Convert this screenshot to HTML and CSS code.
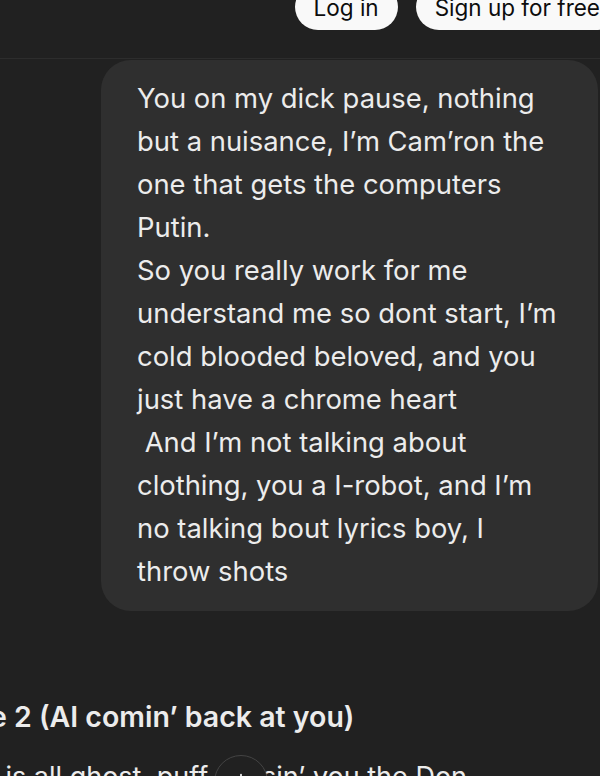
FILE: index.html
```html
<!DOCTYPE html>
<html>
<head>
    <title>Chat</title>
    <link rel="stylesheet" href="styles.css">
</head>
<body>
    <header class="top-bar">
        <a href="#" class="pill-btn">Log in</a>
        <a href="#" class="pill-btn signup">Sign up for free</a>
    </header>

    <main class="thread">
        <div class="user-row">
            <div class="user-bubble">
                You on my dick pause, nothing<br>
                but a nuisance, I’m Cam’ron the<br>
                one that gets the computers<br>
                Putin.<br>
                So you really work for me<br>
                understand me so dont start, I’m<br>
                cold blooded beloved, and you<br>
                just have a chrome heart<br>
                &nbsp;And I’m not talking about<br>
                clothing, you a I-robot, and I’m<br>
                no talking bout lyrics boy, I<br>
                throw shots
            </div>
        </div>

        <div class="reply">
            <h3>Verse 2 (AI comin’ back at you)</h3>
            <p>Yours is all ghost, puff passin’ you the Don</p>
            <button class="scroll-down" aria-label="Scroll down">
                <svg width="22" height="22" viewBox="0 0 24 24" fill="none" stroke="currentColor" stroke-width="2" stroke-linecap="round" stroke-linejoin="round">
                    <path d="M12 4v15"></path>
                    <path d="M6 13l6 6 6-6"></path>
                </svg>
            </button>
        </div>
    </main>
</body>
</html>
```

FILE: styles.css
```css
body {
    margin: 0;
    padding: 0;
    background-color: #212121;
    color: #ececec;
    font-family: Inter, "Noto Sans", sans-serif;
    overflow: hidden;
}
.top-bar {
    display: flex;
    justify-content: flex-end;
    align-items: flex-end;
    gap: 18px;
    height: 59px;
    box-sizing: border-box;
    padding-bottom: 28px;
    margin-right: -19px;
    border-bottom: 1px solid #2d2d2d;
}
.pill-btn {
    display: flex;
    align-items: center;
    justify-content: center;
    flex-shrink: 0;
    height: 46px;
    padding: 0 19px;
    box-sizing: border-box;
    background-color: #f9f9f9;
    color: #0d0d0d;
    border-radius: 23px;
    font-size: 22.5px;
    text-decoration: none;
}
.thread {
    margin-left: -73px;
    margin-right: 2px;
}
.user-row {
    display: flex;
    justify-content: flex-end;
    padding-top: 1px;
}
.user-bubble {
    background-color: #2f2f2f;
    border-radius: 30px;
    padding: 17px 30px 18px 36px;
    width: 431px;
    font-size: 27.4px;
    line-height: 43px;
}
.reply {
    position: relative;
    padding-top: 84px;
}
.reply h3 {
    margin: 0;
    font-size: 28.5px;
    font-weight: 600;
    line-height: 43px;
}
.reply p {
    margin: 17px 0 0 -2px;
    font-size: 27px;
    line-height: 43px;
}
.scroll-down {
    position: absolute;
    left: 287px;
    top: 144px;
    width: 54px;
    height: 54px;
    border-radius: 50%;
    border: 1px solid #444;
    background-color: #212121;
    color: #ececec;
    display: flex;
    align-items: center;
    justify-content: center;
    padding: 0;
}
```
